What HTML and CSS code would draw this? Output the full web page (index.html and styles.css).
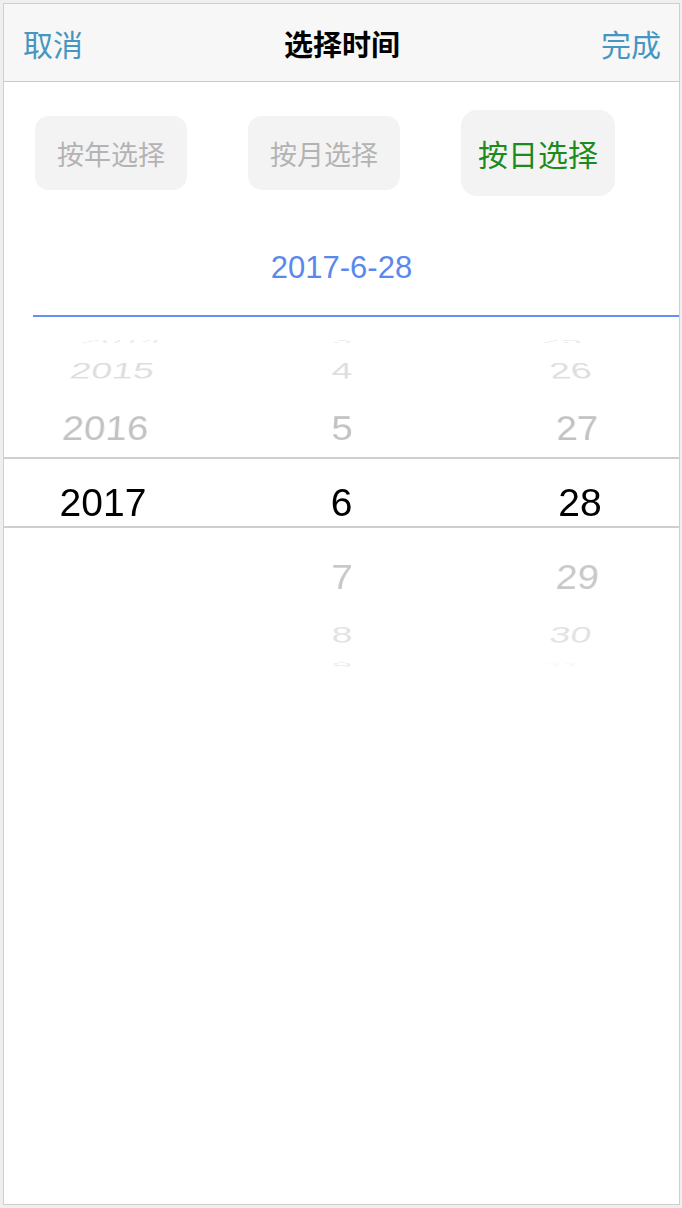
FILE: index.html
```html
<!DOCTYPE html>
<html lang="zh-CN">
<head>
<meta charset="utf-8">
<title>选择时间</title>
<link rel="stylesheet" href="styles.css">
</head>
<body>
<div class="frame">
  <header class="bar">
    <span class="bar-btn">取消</span>
    <span class="bar-title">选择时间</span>
    <span class="bar-btn">完成</span>
  </header>
  <div class="tabs">
    <div class="tab">按年选择</div>
    <div class="tab">按月选择</div>
    <div class="tab tab-active">按日选择</div>
  </div>
  <div class="date">2017-6-28</div>
  <div class="date-line"></div>
  <div class="picker">
    <div class="clip">
      <div class="indicator">
        <div class="col">
          <div class="item k-3">2014</div>
          <div class="item k-2">2015</div>
          <div class="item k-1">2016</div>
          <div class="item k0">2017</div>
        </div>
        <div class="col">
          <div class="item k-3">3</div>
          <div class="item k-2">4</div>
          <div class="item k-1">5</div>
          <div class="item k0">6</div>
          <div class="item k1">7</div>
          <div class="item k2">8</div>
          <div class="item k3">9</div>
        </div>
        <div class="col">
          <div class="item k-3">25</div>
          <div class="item k-2">26</div>
          <div class="item k-1">27</div>
          <div class="item k0">28</div>
          <div class="item k1">29</div>
          <div class="item k2">30</div>
          <div class="item k3 faint">31</div>
        </div>
      </div>
    </div>
  </div>
</div>
</body>
</html>
```

FILE: styles.css
```css
html, body {
  margin: 0;
  padding: 0;
  background: #efefef;
}

body {
  font-family: "Liberation Sans", "Noto Sans CJK SC", sans-serif;
  overflow: hidden;
}

.frame {
  margin: 3px 0 0 3px;
  width: 675px;
  height: 1200px;
  border: 1px solid #cfcfcf;
  background: #ffffff;
  overflow: hidden;
}

.bar {
  height: 77px;
  background: #f7f7f7;
  border-bottom: 1px solid #c9c9c9;
  display: flex;
  align-items: center;
  justify-content: space-between;
  padding: 0 18px 0 19px;
  font-family: "Noto Sans CJK SC", sans-serif;
}

.bar-btn {
  font-size: 30px;
  line-height: 38px;
  color: #4596c0;
}

.bar-title {
  font-size: 29px;
  line-height: 38px;
  font-weight: bold;
  color: #000;
}

.tabs {
  display: flex;
  align-items: center;
  gap: 61px;
  padding: 28px 0 0 31px;
  font-family: "Noto Sans CJK SC", sans-serif;
}

.tab {
  width: 152px;
  height: 74px;
  border-radius: 14px;
  background: #f3f3f3;
  color: #b3b3b3;
  font-size: 27px;
  display: flex;
  align-items: center;
  justify-content: center;
}

.tab-active {
  width: 154px;
  height: 86px;
  border-radius: 16px;
  color: #1d8a1d;
  font-size: 30px;
}

.date {
  margin-top: 52px;
  text-align: center;
  font-size: 31px;
  line-height: 40px;
  color: #5b88ec;
}

.date-line {
  margin: 27px 0 0 29px;
  height: 2px;
  background: #6591f0;
}

.picker {
  margin-top: 23px;
}

.clip {
  height: 210px;
  padding-top: 117px;
  overflow: hidden;
}

.indicator {
  height: 67px;
  border-top: 2px solid #cfcfd2;
  border-bottom: 2px solid #cfcfd2;
  display: flex;
  justify-content: space-between;
  padding: 0 19px;
  perspective: 1500px;
  perspective-origin: 50% 46px;
}

.col {
  width: 160px;
  padding-top: 24px;
  display: grid;
  transform-style: preserve-3d;
}

.item {
  grid-area: 1 / 1;
  height: 40px;
  line-height: 40px;
  text-align: center;
  font-size: 39px;
  backface-visibility: hidden;
}

.k-3 { transform: translateZ(-185px) rotateX(72deg) translateZ(185px); color: #ececec; }
.k-2 { transform: translateZ(-185px) rotateX(48deg) translateZ(185px); color: #dedede; }
.k-1 { transform: translateZ(-185px) rotateX(24deg) translateZ(185px); color: #c2c2c2; }
.k0  { color: #000000; }
.k1  { transform: translateZ(-185px) rotateX(-24deg) translateZ(185px); color: #c8c8c8; }
.k2  { transform: translateZ(-185px) rotateX(-48deg) translateZ(185px); color: #e2e2e2; }
.k3  { transform: translateZ(-185px) rotateX(-72deg) translateZ(185px); color: #ececec; }
.faint { color: #f8f8f8; }
```
